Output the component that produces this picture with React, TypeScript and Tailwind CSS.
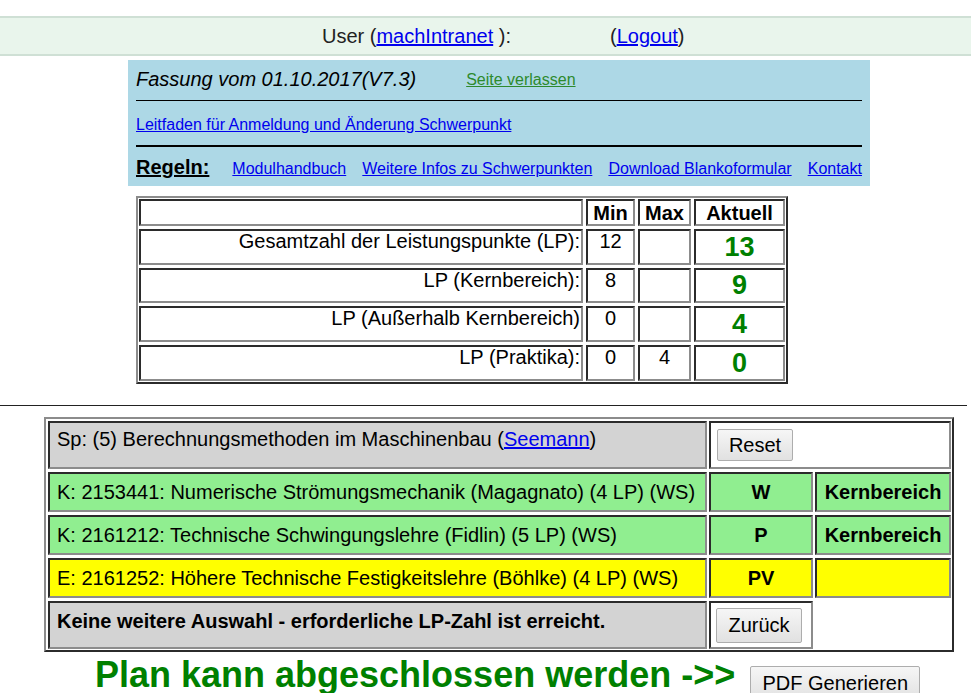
import React from "react";

const OUT =
  "border-2 border-t-[#8c8c8c] border-l-[#8c8c8c] border-r-[#2b2b2b] border-b-[#2b2b2b]";
const CELL =
  "border-2 border-t-[#2b2b2b] border-l-[#2b2b2b] border-r-[#8c8c8c] border-b-[#8c8c8c]";
const BTN =
  "border border-[#adadad] rounded-[2px] bg-gradient-to-b from-[#f6f6f6] to-[#e1e1e1] text-[20px] leading-[23px] text-black";

const rows = [
  { label: "Gesamtzahl der Leistungspunkte (LP):", min: "12", max: "", akt: "13" },
  { label: "LP (Kernbereich):", min: "8", max: "", akt: "9" },
  { label: "LP (Außerhalb Kernbereich)", min: "0", max: "", akt: "4" },
  { label: "LP (Praktika):", min: "0", max: "4", akt: "0" },
];

export default function App() {
  return (
    <div className="w-[971px] h-[693px] overflow-hidden bg-white text-black font-['Liberation_Sans',Arial,sans-serif] text-[20px]">
      {/* top bar */}
      <div className="mt-[16px] h-[40px] border-y-2 border-[#cfe0d5] bg-[#e9f5ec] flex items-center">
        <span className="ml-[322px] text-[#222]">
          User (<a className="text-[#0000ee] underline" href="#">machIntranet</a> ):
        </span>
        <span className="ml-[99px] text-[#222]">
          (<a className="text-[#0000ee] underline" href="#">Logout</a>)
        </span>
      </div>

      {/* blue box */}
      <div className="ml-[128px] mt-[4px] w-[742px] bg-[#add8e6] px-[8px]">
        <div className="h-[40px] flex items-center pb-[3px]">
          <span className="italic">Fassung vom 01.10.2017(V7.3)</span>
          <a href="#" className="ml-[50px] text-[16px] text-[#2d8a2d] underline mt-[2px]">
            Seite verlassen
          </a>
        </div>
        <div className="h-px bg-black" />
        <div className="h-[44px] flex items-center pt-[3px]">
          <a href="#" className="text-[16px] text-[#0000ee] underline">
            Leitfaden für Anmeldung und Änderung Schwerpunkt
          </a>
        </div>
        <div className="h-[2px] bg-black" />
        <div className="h-[39px] pt-[5px] flex items-baseline">
          <span className="font-bold underline">Regeln:</span>
          <div className="ml-[23px] flex-1 flex items-baseline justify-between text-[16px]">
            <a href="#" className="text-[#0000ee] underline">Modulhandbuch</a>
            <a href="#" className="text-[#0000ee] underline">Weitere Infos zu Schwerpunkten</a>
            <a href="#" className="text-[#0000ee] underline">Download Blankoformular</a>
            <a href="#" className="text-[#0000ee] underline">Kontakt</a>
          </div>
        </div>
      </div>

      {/* stats table */}
      <div
        className={`ml-[136px] mt-[10px] w-[652px] ${OUT} p-[1px] grid grid-cols-[444px_49px_53px_91px] grid-rows-[27px_36px_35px_36px_36px] gap-x-[3px] gap-y-[3px]`}
      >
        <div className={CELL} />
        <div className={`${CELL} flex items-center justify-center font-bold`}>Min</div>
        <div className={`${CELL} flex items-center justify-center font-bold`}>Max</div>
        <div className={`${CELL} flex items-center justify-center font-bold`}>Aktuell</div>
        {rows.map((r) => (
          <React.Fragment key={r.label}>
            <div className={`${CELL} text-right pr-[1px] leading-[20px]`}>{r.label}</div>
            <div className={`${CELL} text-center leading-[20px]`}>{r.min}</div>
            <div className={`${CELL} text-center leading-[20px]`}>{r.max}</div>
            <div className={`${CELL} flex items-center justify-center font-bold text-[27px] text-[#008000]`}>
              {r.akt}
            </div>
          </React.Fragment>
        ))}
      </div>

      {/* separator */}
      <div className="mt-[21px] h-px w-[967px] bg-[#222]" />

      {/* bottom table */}
      <div
        className={`ml-[44px] mt-[11px] w-[910px] ${OUT} pl-[2px] pt-[2px] pr-[1px] pb-[1px] grid grid-cols-[659px_104px_136px] grid-rows-[48px_40px_40px_40px_48px] gap-x-[2px] gap-y-[3px]`}
      >
        <div className={`${CELL} bg-[#d3d3d3] pl-[7px] pt-[5px] leading-[23px]`}>
          Sp: (5) Berechnungsmethoden im Maschinenbau (
          <a href="#" className="text-[#0000ee] underline">Seemann</a>)
        </div>
        <div className={`${CELL} col-span-2 bg-white pl-[6px] pt-[6px]`}>
          <button className={`${BTN} w-[76px] h-[32px]`}>Reset</button>
        </div>

        <div className={`${CELL} bg-[#90ee90] pl-[7px] flex items-center`}>
          K: 2153441: Numerische Strömungsmechanik (Magagnato) (4 LP) (WS)
        </div>
        <div className={`${CELL} bg-[#90ee90] flex items-center justify-center font-bold`}>W</div>
        <div className={`${CELL} bg-[#90ee90] flex items-center justify-center font-bold`}>Kernbereich</div>

        <div className={`${CELL} bg-[#90ee90] pl-[7px] flex items-center`}>
          K: 2161212: Technische Schwingungslehre (Fidlin) (5 LP) (WS)
        </div>
        <div className={`${CELL} bg-[#90ee90] flex items-center justify-center font-bold`}>P</div>
        <div className={`${CELL} bg-[#90ee90] flex items-center justify-center font-bold`}>Kernbereich</div>

        <div className={`${CELL} bg-[#ffff00] pl-[7px] flex items-center`}>
          E: 2161252: Höhere Technische Festigkeitslehre (Böhlke) (4 LP) (WS)
        </div>
        <div className={`${CELL} bg-[#ffff00] flex items-center justify-center font-bold`}>PV</div>
        <div className={`${CELL} bg-[#ffff00]`} />

        <div className={`${CELL} bg-[#d3d3d3] pl-[7px] pt-[7px] leading-[23px] font-bold`}>
          Keine weitere Auswahl - erforderliche LP-Zahl ist erreicht.
        </div>
        <div className={`${CELL} bg-white pl-[5px] pt-[5px]`}>
          <button className={`${BTN} w-[86px] h-[35px]`}>Zurück</button>
        </div>
        <div />
      </div>

      {/* plan row */}
      <div className="ml-[95px] mt-[2px] flex items-start">
        <span className="font-bold text-[36px] leading-[41px] text-[#008000]">
          Plan kann abgeschlossen werden -&gt;&gt;
        </span>
        <button className={`${BTN} ml-[15px] mt-[12px] w-[170px] h-[35px]`}>PDF Generieren</button>
      </div>
    </div>
  );
}
